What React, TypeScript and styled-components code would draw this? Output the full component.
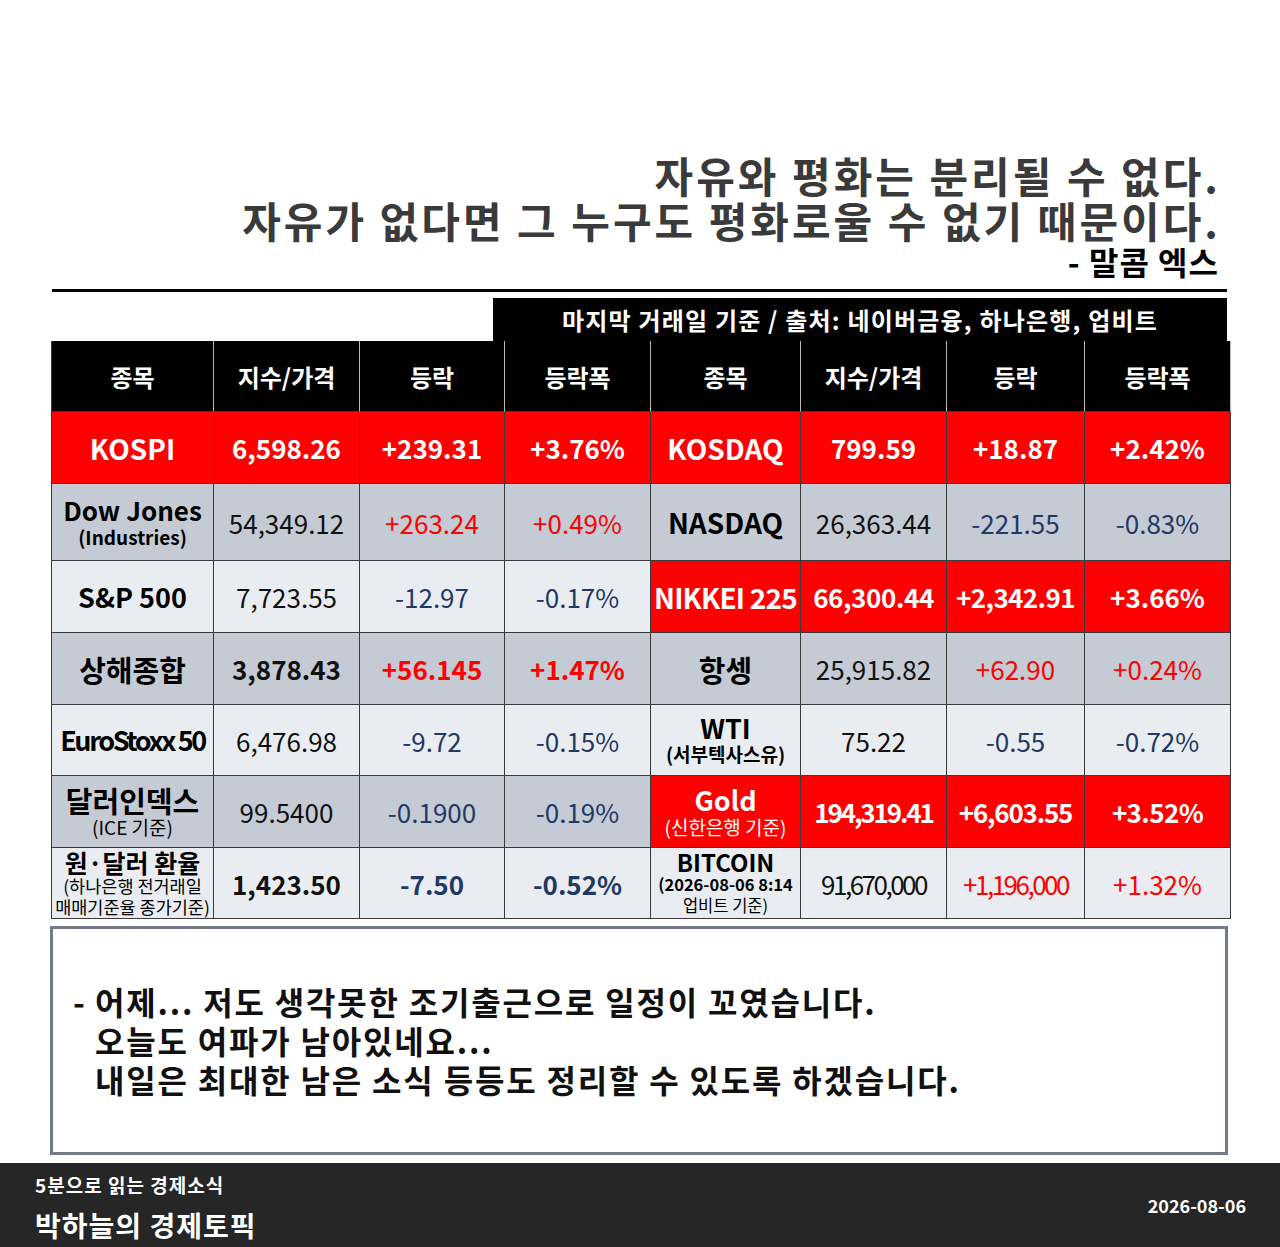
import { Fragment } from "react";
import styled, { createGlobalStyle } from "styled-components";

type Tone = "red" | "gray" | "light";
type Ink = "plain" | "up" | "down";

interface Market {
  name: string;
  nameSize?: number;
  nameTight?: number;
  nameLine?: number;
  sub?: string[];
  subSize?: number;
  subLine?: number;
  subBold?: boolean[];
  tone: Tone;
  value: string;
  change: string;
  pct: string;
  ink: Ink;
  strong?: boolean;
  tight?: [number, number, number];
}

const GlobalStyle = createGlobalStyle`
  body {
    margin: 0;
    background: #fff;
    font-family: "Noto Sans CJK KR", "Noto Sans", "Liberation Sans", sans-serif;
  }
`;

const TONES: Record<Tone | "head", string> = {
  head: "#000000",
  red: "#ff0000",
  gray: "#c5cbd4",
  light: "#e9edf1",
};

const INKS: Record<Ink, string> = {
  plain: "#111111",
  up: "#ff0000",
  down: "#1f3864",
};

const Page = styled.div`
  width: 1280px;
  height: 1247px;
  display: flex;
  flex-direction: column;
  overflow: hidden;
`;

const QuoteBlock = styled.div`
  padding: 152px 62px 0 0;
  text-align: right;
`;

const QuoteLine = styled.div`
  font-size: 42px;
  font-weight: 700;
  line-height: 45px;
  letter-spacing: 3px;
  margin-right: -3px;
  color: #3a3a3a;
`;

const Author = styled.div`
  font-size: 32px;
  font-weight: 700;
  line-height: 38px;
  letter-spacing: 1px;
  margin-right: -1px;
  color: #000;
`;

const Rule = styled.div`
  margin: 9px 53px 0 52px;
  height: 3px;
  background: #000;
`;

const SourceBar = styled.div`
  margin: 6px 53px 0 493px;
  height: 43px;
  background: #000;
  color: #fff;
  display: flex;
  align-items: center;
  justify-content: center;
  font-size: 24px;
  font-weight: 700;
  letter-spacing: 1.2px;
`;

const Board = styled.div`
  margin: 0 0 0 51px;
  width: 1179px;
  display: grid;
  grid-template-columns: 162px 146px 145px 146px 150px 146px 138px 146px;
  grid-template-rows: 71px 72px 77px 72px 72px 71px 72px 71px;
  border-left: 1px solid #3a3a3a;
  box-sizing: border-box;
`;

const Cell = styled.div<{ $tone: Tone | "head" }>`
  box-sizing: border-box;
  min-width: 0;
  background: ${(p) => TONES[p.$tone]};
  border-right: 1px solid ${(p) => (p.$tone === "head" ? "#b8b8b8" : "#3a3a3a")};
  border-bottom: 1px solid #3a3a3a;
  display: flex;
  flex-direction: column;
  align-items: center;
  justify-content: center;
  text-align: center;
  white-space: nowrap;
`;

const HeadText = styled.span`
  color: #fff;
  font-size: 24px;
  font-weight: 700;
`;

const Name = styled.div<{ $size: number; $tight: number; $line: number; $light: boolean }>`
  font-size: ${(p) => p.$size}px;
  font-weight: 700;
  letter-spacing: ${(p) => p.$tight}px;
  line-height: ${(p) => p.$line}px;
  color: ${(p) => (p.$light ? "#fff" : "#000")};
`;

const Sub = styled.div<{ $size: number; $line: number; $bold: boolean; $light: boolean }>`
  font-size: ${(p) => p.$size}px;
  font-weight: ${(p) => (p.$bold ? 700 : 400)};
  line-height: ${(p) => p.$line}px;
  color: ${(p) => (p.$light ? "#fff" : "#000")};
`;

const Figure = styled.span<{ $color: string; $bold: boolean; $tight: number }>`
  font-size: 26px;
  font-weight: ${(p) => (p.$bold ? 700 : 400)};
  letter-spacing: ${(p) => p.$tight}px;
  color: ${(p) => p.$color};
`;

const NoteBox = styled.div`
  margin: 7px 52px 0 50px;
  height: 229px;
  box-sizing: border-box;
  border: 3px solid #737b87;
  display: flex;
  align-items: center;
  padding-left: 20px;
`;

const Note = styled.div`
  display: flex;
  align-items: flex-start;
  font-size: 32px;
  font-weight: 700;
  line-height: 39px;
  letter-spacing: 1.8px;
  color: #111;
`;

const Dash = styled.span`
  width: 22px;
  flex: none;
`;

const NoteLines = styled.div`
  display: flex;
  flex-direction: column;
`;

const Footer = styled.div`
  margin-top: 8px;
  flex: 1;
  background: #262626;
  color: #fff;
  display: flex;
  justify-content: space-between;
  padding: 0 34px 0 35px;
`;

const Brand = styled.div`
  display: flex;
  flex-direction: column;
  padding-top: 11px;
`;

const Tagline = styled.div`
  font-size: 19px;
  font-weight: 700;
  line-height: 22px;
  letter-spacing: 1px;
`;

const Title = styled.div`
  margin-top: 12px;
  font-size: 28px;
  font-weight: 700;
  line-height: 34px;
  letter-spacing: 1px;
`;

const DateText = styled.div`
  align-self: center;
  font-size: 18px;
  font-weight: 700;
`;

const HEADERS = ["종목", "지수/가격", "등락", "등락폭"];

const ROWS: [Market, Market][] = [
  [
    { name: "KOSPI", nameSize: 28, tone: "red", value: "6,598.26", change: "+239.31", pct: "+3.76%", ink: "up", strong: true },
    { name: "KOSDAQ", nameSize: 28, tone: "red", value: "799.59", change: "+18.87", pct: "+2.42%", ink: "up", strong: true },
  ],
  [
    { name: "Dow Jones", nameSize: 26, nameLine: 30, sub: ["(Industries)"], subSize: 19, subLine: 24, subBold: [true], tone: "gray", value: "54,349.12", change: "+263.24", pct: "+0.49%", ink: "up" },
    { name: "NASDAQ", nameSize: 28, tone: "gray", value: "26,363.44", change: "-221.55", pct: "-0.83%", ink: "down" },
  ],
  [
    { name: "S&P 500", tone: "light", value: "7,723.55", change: "-12.97", pct: "-0.17%", ink: "down" },
    { name: "NIKKEI 225", nameSize: 28, nameTight: -0.8, tone: "red", value: "66,300.44", change: "+2,342.91", pct: "+3.66%", ink: "up", strong: true, tight: [-0.4, -0.6, 0] },
  ],
  [
    { name: "상해종합", nameSize: 29, tone: "gray", value: "3,878.43", change: "+56.145", pct: "+1.47%", ink: "up", strong: true },
    { name: "항셍", nameSize: 29, tone: "gray", value: "25,915.82", change: "+62.90", pct: "+0.24%", ink: "up" },
  ],
  [
    { name: "EuroStoxx 50", nameTight: -2.4, tone: "light", value: "6,476.98", change: "-9.72", pct: "-0.15%", ink: "down" },
    { name: "WTI", nameLine: 28, sub: ["(서부텍사스유)"], subSize: 19, subLine: 24, subBold: [true], tone: "light", value: "75.22", change: "-0.55", pct: "-0.72%", ink: "down" },
  ],
  [
    { name: "달러인덱스", nameSize: 29, nameLine: 30, sub: ["(ICE 기준)"], subSize: 19, subLine: 24, subBold: [false], tone: "gray", value: "99.5400", change: "-0.1900", pct: "-0.19%", ink: "down" },
    { name: "Gold", nameLine: 30, sub: ["(신한은행 기준)"], subSize: 19, subLine: 24, subBold: [false], tone: "red", value: "194,319.41", change: "+6,603.55", pct: "+3.52%", ink: "up", strong: true, tight: [-2.1, -1.2, -0.6] },
  ],
  [
    { name: "원·달러 환율", nameSize: 25, nameLine: 26, sub: ["(하나은행 전거래일", "매매기준율 종가기준)"], subSize: 17.5, subLine: 21, subBold: [false, false], tone: "light", value: "1,423.50", change: "-7.50", pct: "-0.52%", ink: "down", strong: true },
    { name: "BITCOIN", nameSize: 24, nameLine: 24, sub: ["(2026-08-06 8:14", "업비트 기준)"], subSize: 16.5, subLine: 21, subBold: [true, false], tone: "light", value: "91,670,000", change: "+1,196,000", pct: "+1.32%", ink: "up", tight: [-2.5, -2.5, 0] },
  ],
];

const MarketCells = ({ m }: { m: Market }) => {
  const onRed = m.tone === "red";
  const bold = onRed || !!m.strong;
  const tight = m.tight ?? [0, 0, 0];
  const valueColor = onRed ? "#fff" : INKS.plain;
  const moveColor = onRed ? "#fff" : INKS[m.ink];
  return (
    <>
      <Cell $tone={m.tone}>
        <Name
          $size={m.nameSize ?? 27}
          $tight={m.nameTight ?? 0}
          $line={m.nameLine ?? 34}
          $light={onRed}
        >
          {m.name}
        </Name>
        {m.sub?.map((s, i) => (
          <Sub
            key={s}
            $size={m.subSize ?? 18}
            $line={m.subLine ?? 22}
            $bold={!!m.subBold?.[i]}
            $light={onRed}
          >
            {s}
          </Sub>
        ))}
      </Cell>
      <Cell $tone={m.tone}>
        <Figure $color={valueColor} $bold={bold} $tight={tight[0]}>{m.value}</Figure>
      </Cell>
      <Cell $tone={m.tone}>
        <Figure $color={moveColor} $bold={bold} $tight={tight[1]}>{m.change}</Figure>
      </Cell>
      <Cell $tone={m.tone}>
        <Figure $color={moveColor} $bold={bold} $tight={tight[2]}>{m.pct}</Figure>
      </Cell>
    </>
  );
};

const App = () => {
  return (
    <Page>
      <GlobalStyle />
      <QuoteBlock>
        <QuoteLine>자유와 평화는 분리될 수 없다.</QuoteLine>
        <QuoteLine>자유가 없다면 그 누구도 평화로울 수 없기 때문이다.</QuoteLine>
        <Author>- 말콤 엑스</Author>
      </QuoteBlock>
      <Rule />
      <SourceBar>마지막 거래일 기준 / 출처: 네이버금융, 하나은행, 업비트</SourceBar>
      <Board>
        {[...HEADERS, ...HEADERS].map((h, i) => (
          <Cell key={i} $tone="head">
            <HeadText>{h}</HeadText>
          </Cell>
        ))}
        {ROWS.map(([left, right]) => (
          <Fragment key={left.name}>
            <MarketCells m={left} />
            <MarketCells m={right} />
          </Fragment>
        ))}
      </Board>
      <NoteBox>
        <Note>
          <Dash>-</Dash>
          <NoteLines>
            <span>어제... 저도 생각못한 조기출근으로 일정이 꼬였습니다.</span>
            <span>오늘도 여파가 남아있네요...</span>
            <span>내일은 최대한 남은 소식 등등도 정리할 수 있도록 하겠습니다.</span>
          </NoteLines>
        </Note>
      </NoteBox>
      <Footer>
        <Brand>
          <Tagline>5분으로 읽는 경제소식</Tagline>
          <Title>박하늘의 경제토픽</Title>
        </Brand>
        <DateText>2026-08-06</DateText>
      </Footer>
    </Page>
  );
};

export default App;
